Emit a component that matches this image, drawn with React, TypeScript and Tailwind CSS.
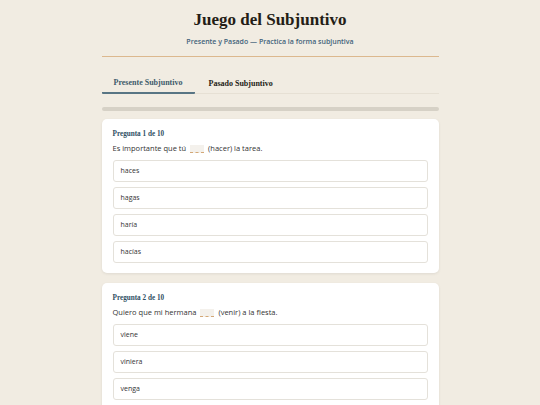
import React from "react";

const serif = { fontFamily: '"Liberation Serif", "DejaVu Serif", serif' };

interface Question {
  before: string;
  after: string;
  options: string[];
}

const questions: Question[] = [
  { before: "Es importante que tú", after: "(hacer) la tarea.", options: ["haces", "hagas", "haría", "hacías"] },
  { before: "Quiero que mi hermana", after: "(venir) a la fiesta.", options: ["viene", "viniera", "venga", "vendrá"] },
];

function Blank() {
  return (
    <span className="inline-block w-[14px] h-[8px] mx-[4px] align-[-2px] bg-[#f4f1ec] border-b border-dashed border-[#d4a877]" />
  );
}

function QuestionCard({ q, index }: { q: Question; index: number }) {
  return (
    <div className="bg-white rounded-[5px] shadow-[0_1px_3px_rgba(0,0,0,0.08)] px-[11px] pt-[10px] pb-[10px]">
      <div className="text-[7.2px] font-bold text-[#2f4f63] leading-[10px]" style={serif}>
        Pregunta {index + 1} de 10
      </div>
      <p className="text-[7.5px] text-[#333] leading-[12px] mt-[3px] mb-[6px]">
        {q.before}
        <Blank />
        {q.after}
      </p>
      <div className="flex flex-col gap-[5px]">
        {q.options.map((o) => (
          <div
            key={o}
            className="h-[22px] flex items-center px-[7px] border border-[#e4e1da] rounded-[3px] text-[7px] text-[#333] bg-white"
          >
            {o}
          </div>
        ))}
      </div>
    </div>
  );
}

export default function App() {
  return (
    <div
      className="min-h-screen w-full bg-[#f1ece2] text-[#2b241c]"
      style={{ fontFamily: '"Open Sans", "DejaVu Sans", sans-serif' }}
    >
      <div className="w-[337px] mx-auto pt-[9px]">
        {/* Header */}
        <header className="text-center border-b-[1.5px] border-[#dcb88e] pb-[9px]">
          <h1 className="text-[17px] font-bold leading-[22px] text-[#241d16]" style={serif}>
            Juego del Subjuntivo
          </h1>
          <p className="text-[7px] font-semibold text-[#44637a] mt-[6px] leading-[10px]">
            Presente y Pasado — Practica la forma subjuntiva
          </p>
        </header>

        {/* Tabs */}
        <nav className="flex mt-[20px] border-b border-[#e6e0d4]" style={serif}>
          <button className="w-[93px] text-[8px] font-bold text-[#3e5b6c] pb-[3px] border-b-2 border-[#587584] -mb-px rounded-b-[1px]">
            Presente Subjuntivo
          </button>
          <button className="ml-[14px] text-[8px] font-bold text-[#241d16] pb-[3px]">
            Pasado Subjuntivo
          </button>
        </nav>

        {/* Progress */}
        <div className="h-[4px] rounded-full bg-[#d6d1c6] mt-[13px] overflow-hidden">
          <div className="h-full bg-[#3e5b6c]" style={{ width: "0%" }} />
        </div>

        {/* Questions */}
        <div className="flex flex-col gap-[10px] mt-[8px]">
          {questions.map((q, i) => (
            <QuestionCard key={i} q={q} index={i} />
          ))}
        </div>
      </div>
    </div>
  );
}
